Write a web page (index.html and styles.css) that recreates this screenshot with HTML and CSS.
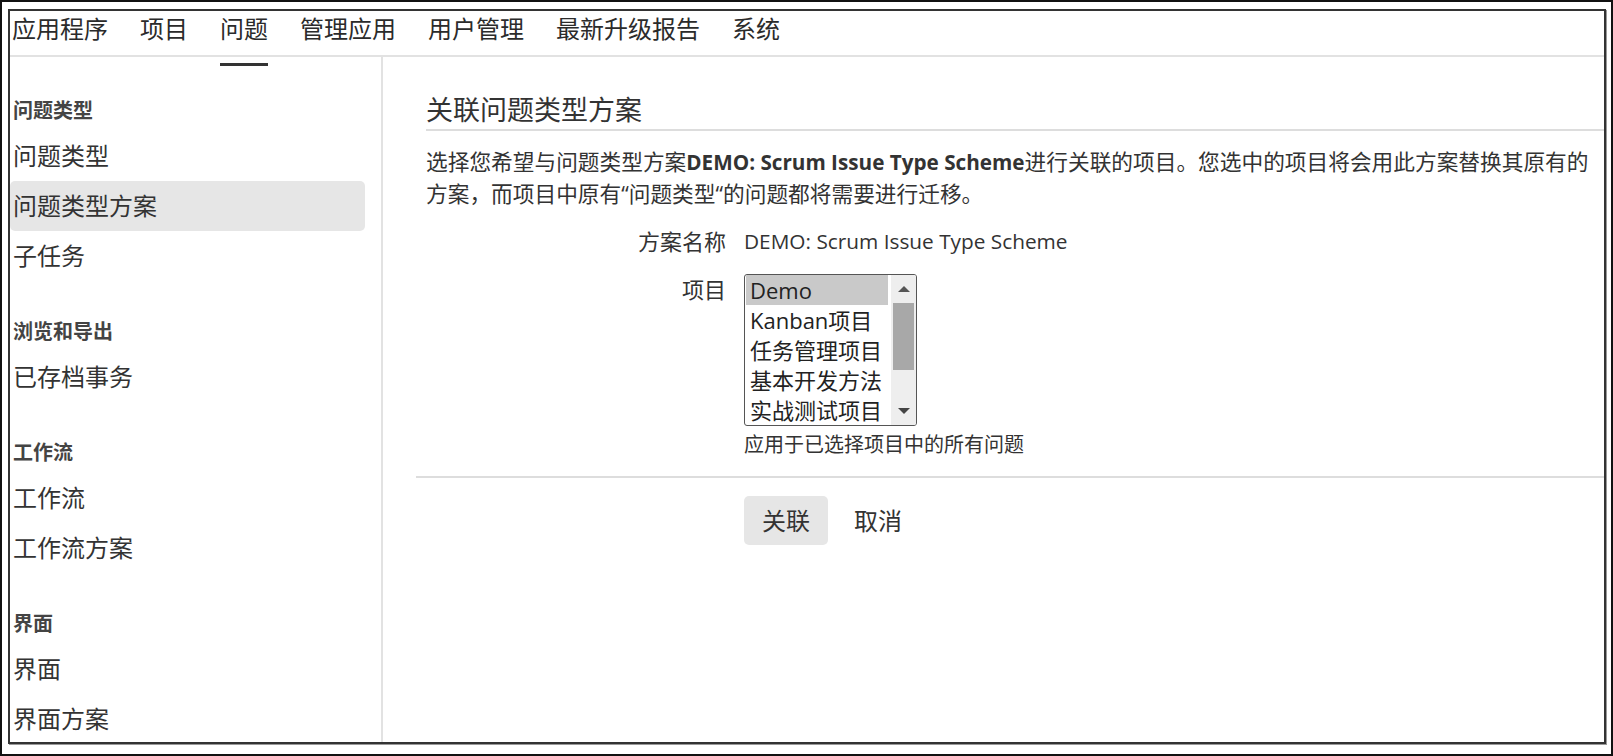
FILE: index.html
```html
<!DOCTYPE html>
<html lang="zh-CN">
<head>
<meta charset="utf-8">
<title>关联问题类型方案</title>
<link rel="stylesheet" href="styles.css">
</head>
<body>
<div class="app">
  <nav class="topnav">
    <a class="nav-item" href="#">应用程序</a>
    <a class="nav-item" href="#">项目</a>
    <a class="nav-item active" href="#">问题</a>
    <a class="nav-item" href="#">管理应用</a>
    <a class="nav-item" href="#">用户管理</a>
    <a class="nav-item" href="#">最新升级报告</a>
    <a class="nav-item" href="#">系统</a>
  </nav>
  <div class="layout">
    <aside class="sidebar">
      <section class="side-group">
        <h3 class="side-title">问题类型</h3>
        <ul class="side-list">
          <li class="side-item">问题类型</li>
          <li class="side-item active">问题类型方案</li>
          <li class="side-item">子任务</li>
        </ul>
      </section>
      <section class="side-group">
        <h3 class="side-title">浏览和导出</h3>
        <ul class="side-list">
          <li class="side-item">已存档事务</li>
        </ul>
      </section>
      <section class="side-group">
        <h3 class="side-title">工作流</h3>
        <ul class="side-list">
          <li class="side-item">工作流</li>
          <li class="side-item">工作流方案</li>
        </ul>
      </section>
      <section class="side-group">
        <h3 class="side-title">界面</h3>
        <ul class="side-list">
          <li class="side-item">界面</li>
          <li class="side-item">界面方案</li>
        </ul>
      </section>
    </aside>
    <main class="content">
      <h2 class="page-title">关联问题类型方案</h2>
      <p class="intro">选择您希望与问题类型方案<strong>DEMO: Scrum Issue Type Scheme</strong>进行关联的项目。您选中的项目将会用此方案替换其原有的方案，而项目中原有“问题类型“的问题都将需要进行迁移。</p>
      <div class="form-grid">
        <div class="form-label">方案名称</div>
        <div class="form-value">DEMO: Scrum Issue Type Scheme</div>
        <div class="form-label">项目</div>
        <div class="form-field">
          <div class="listbox">
            <ul class="options">
              <li class="option selected">Demo</li>
              <li class="option">Kanban项目</li>
              <li class="option">任务管理项目</li>
              <li class="option">基本开发方法</li>
              <li class="option">实战测试项目</li>
            </ul>
            <div class="scrollbar">
              <span class="arrow arrow-up"></span>
              <span class="track"><span class="thumb"></span></span>
              <span class="arrow arrow-down"></span>
            </div>
          </div>
          <div class="help">应用于已选择项目中的所有问题</div>
        </div>
      </div>
      <div class="actions">
        <div class="buttons">
          <button class="btn" type="button">关联</button>
          <button class="btn btn-link" type="button">取消</button>
        </div>
      </div>
    </main>
  </div>
</div>
</body>
</html>
```
FILE: styles.css
```css
html {
  height: 100%;
}

body {
  margin: 0;
  height: 100%;
  box-sizing: border-box;
  border: 2px solid #111;
  padding: 7px 5px 10px 6px;
  display: flex;
  background: #fff;
  color: #333;
  font-family: "Open Sans", "Noto Sans CJK SC", sans-serif;
}

.app {
  flex: 1;
  min-width: 0;
  display: flex;
  flex-direction: column;
  border: 2px solid #333;
  box-shadow: 1px 1px 0 #999;
  overflow: hidden;
}

/* top navigation */
.topnav {
  display: flex;
  gap: 32px;
  height: 44px;
  padding-left: 2px;
  border-bottom: 2px solid #e2e2e2;
  flex-shrink: 0;
}

.nav-item {
  position: relative;
  font-size: 24px;
  line-height: 36px;
  color: #2b2b2b;
  text-decoration: none;
}

.nav-item.active::after {
  content: "";
  position: absolute;
  left: 0;
  right: 0;
  bottom: -11px;
  height: 3px;
  background: #333;
}

/* layout */
.layout {
  flex: 1;
  min-height: 0;
  display: flex;
  overflow: hidden;
}

.sidebar {
  width: 373px;
  flex-shrink: 0;
  box-sizing: border-box;
  border-right: 2px solid #e2e2e2;
  padding: 39px 16px 0 0;
}

.side-group + .side-group {
  margin-top: 36px;
}

.side-title {
  margin: 0 0 5px;
  padding-left: 3px;
  font-size: 20px;
  line-height: 30px;
  font-weight: 700;
  color: #444;
}

.side-list {
  list-style: none;
  margin: 0;
  padding: 0;
}

.side-item {
  padding-left: 3px;
  font-size: 24px;
  line-height: 50px;
  border-radius: 5px;
  color: #333;
}

.side-item.active {
  background: #e6e6e6;
}

/* main content */
.content {
  flex: 1;
  min-width: 0;
  padding: 35px 0 0 33px;
}

.page-title {
  margin: 0 0 0 10px;
  padding: 0 0 1px;
  font-size: 27px;
  line-height: 36px;
  font-weight: 400;
  color: #333;
  border-bottom: 2px solid #ddd;
}

.intro {
  margin: 15px 0 0;
  padding: 0 0 0 10px;
  font-size: 21.7px;
  line-height: 31px;
}

.intro strong {
  font-weight: 700;
  font-size: 20.7px;
}

.form-grid {
  display: grid;
  grid-template-columns: 310px auto;
  column-gap: 18px;
  row-gap: 18px;
  margin-top: 17px;
  align-items: start;
}

.form-label {
  text-align: right;
  font-size: 22px;
  line-height: 30px;
}

.form-value {
  font-size: 20.8px;
  line-height: 30px;
}

/* list box */
.listbox {
  display: flex;
  width: 173px;
  height: 152px;
  box-sizing: border-box;
  border: 1px solid #555;
  border-radius: 3px;
  overflow: hidden;
}

.options {
  flex: 1;
  list-style: none;
  margin: 0;
  padding: 0 3px 0 1px;
}

.option {
  height: 30px;
  padding-left: 4px;
  font-size: 22px;
  line-height: 30px;
  white-space: nowrap;
  color: #222;
}

.option.selected {
  background: #c9c9c9;
}

.scrollbar {
  width: 25px;
  display: flex;
  flex-direction: column;
  background: #eeeeee;
}

.arrow {
  height: 28px;
  display: flex;
  align-items: center;
  justify-content: center;
}

.arrow::before {
  content: "";
  width: 0;
  height: 0;
  border-left: 6px solid transparent;
  border-right: 6px solid transparent;
}

.arrow-up::before {
  border-bottom: 6px solid #555;
}

.arrow-down::before {
  border-top: 6px solid #444;
}

.track {
  flex: 1;
  display: flex;
  flex-direction: column;
  padding: 0 2px;
}

.thumb {
  height: 67px;
  background: #a8a8a8;
}

.help {
  margin-top: 7px;
  font-size: 20px;
  line-height: 24px;
}

/* actions */
.actions {
  display: grid;
  grid-template-columns: 310px auto;
  column-gap: 18px;
  margin-top: 19px;
  padding-top: 18px;
  border-top: 2px solid #ddd;
}

.buttons {
  grid-column: 2;
  display: flex;
  gap: 8px;
}

.btn {
  height: 49px;
  padding: 0 18px;
  border: 0;
  border-radius: 5px;
  background: #e6e6e6;
  color: #333;
  font-family: "Open Sans", "Noto Sans CJK SC", sans-serif;
  font-size: 24px;
  line-height: 49px;
}

.btn-link {
  background: transparent;
}
```
